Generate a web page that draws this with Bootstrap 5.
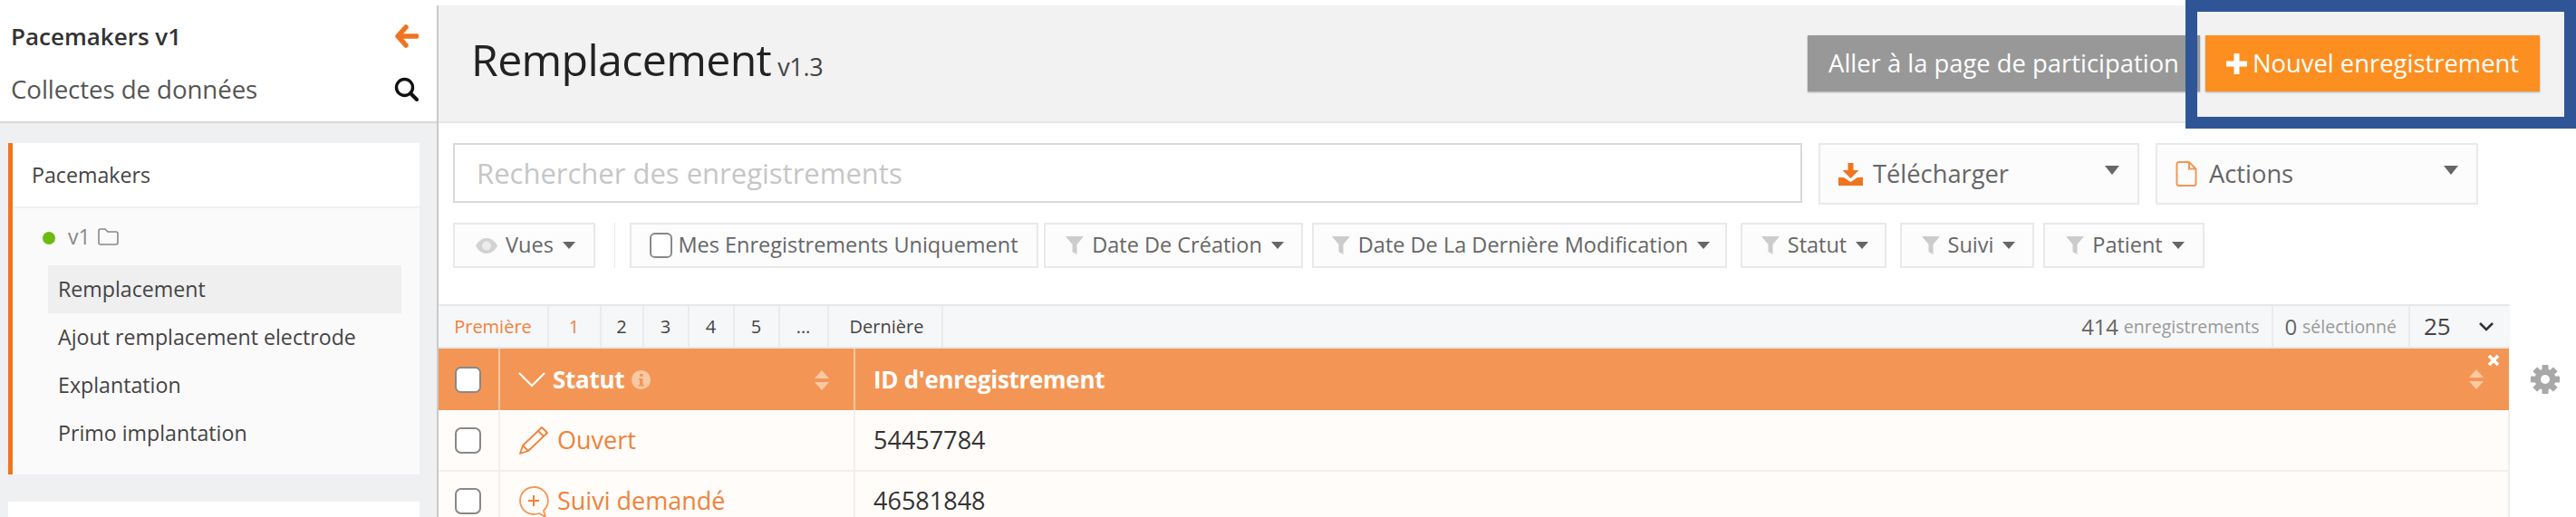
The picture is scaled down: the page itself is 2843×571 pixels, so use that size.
<!DOCTYPE html>
<html lang="fr">
<head>
<meta charset="utf-8">
<title>Remplacement</title>
<link href="https://cdn.jsdelivr.net/npm/bootstrap@5.3.0/dist/css/bootstrap.min.css" rel="stylesheet">
<style>
html,body{height:571px;overflow:hidden;background:#fff}
body{font-family:"Open Sans","Noto Sans",sans-serif;color:#333;width:2843px;position:relative}
.app-shell{height:571px;overflow:hidden}
.side-col{width:482px;flex:none;background:#eef0f2;height:571px;overflow:hidden}
.side-head{background:#fff;height:136px;border-bottom:2px solid #d9d9d9;padding:22px 20px 0 12px}
.side-title{font-size:26px;font-weight:600;line-height:36px;height:36px;color:#333}
.side-sub{font-size:27.700px;line-height:36px;margin-top:22px;color:#555;letter-spacing:-.1px}
.side-card{margin:22px 19px 0 9px;border-left:5px solid #f0741f;background:#fafafa;height:366px;padding:0}
.side-card-title{background:#fff;height:72px;border-bottom:2px solid #f1f1f1;font-size:23.200px;padding-left:21px;color:#444;display:flex;align-items:center}
.side-version{font-size:23px;color:#888;height:63px;padding-left:33px;gap:14px}
.vdot{width:14px;height:14px;border-radius:50%;background:#6cbb0e;display:block;margin-top:2px}
.side-links{margin:0 20px 0 39px}
.side-links .list-group-item{background:transparent;border:0;height:53px;padding:0 11px;font-size:23.200px;line-height:53px;color:#444;border-radius:0}
.side-links .list-group-item.is-current{background:#efefef}
.side-card2{margin:30px 19px 0 9px;background:#fff;height:60px}
.main-col{flex:1;min-width:0;margin-top:6px;border-left:2px solid #c9c9c9;height:565px;overflow:hidden;position:relative}
.page-head{background:#f2f2f2;height:130px;border-bottom:2px solid #e6e6e6;padding:0 40px 0 36px}
.page-name{font-size:48.200px;font-weight:400;margin:0;color:#222;line-height:1;letter-spacing:-.6px;position:relative;top:-5px}
.page-name small{font-size:27px;color:#444;letter-spacing:-.3px;margin-left:7px}
.head-btn{height:62px;border:0;border-radius:0;font-size:27.400px;color:#fff;box-shadow:0 1px 2px rgba(0,0,0,.3);padding:0;display:flex;align-items:center;justify-content:center}
.btn-grey{width:433px;background:#989898}
.btn-grey:hover{background:#989898;color:#fff}
.btn-orange{width:369px;background:#fc8f20;margin-left:6px;gap:6px}
.btn-orange:hover{background:#fc8f20;color:#fff}
.tools{padding:22px 0 0 16px}
.search-box.form-control{width:1489px;height:66px;flex:none;border:2px solid #d9d9d9;border-radius:0;font-size:31px;padding:0 24px;color:#333}
.search-box::placeholder{color:#c6c6c6;opacity:1}
.drop-btn{height:68px;width:354px;margin-left:18px;background:#fcfcfc;border:2px solid #e8e9ec;border-radius:0;font-size:27.300px;color:#666;padding:0 22px 0 20px;display:flex;align-items:center;gap:11px;position:relative}
.drop-btn.second{width:356px;gap:13px}
.caret-big{position:absolute;right:20px;top:23px;width:0;height:0;border-left:8.500px solid transparent;border-right:8.500px solid transparent;border-top:10px solid #666}
.filters{margin-top:20px;height:50px}
.fbtn{height:50px;background:#fcfcfc;border:2px solid #e8e9ec;border-radius:0;font-size:23.500px;color:#666;padding:0 0 0 3px;display:flex;align-items:center;justify-content:center;gap:9px;flex:none;white-space:nowrap}
.caret-sm{width:0;height:0;border-left:7px solid transparent;border-right:7px solid transparent;border-top:8px solid #666;margin-left:1px}
.vsep{width:1px;height:50px;background:#e8e9ec;margin:0 16px 0 21px;flex:none}
.box{width:25px;height:28px;margin:0;border:2px solid #888;border-radius:5px;flex:none;background:#fff}
.fbtn.w-mes{gap:6px;padding-left:0}
.w-vues{width:157px}.w-mes{width:451px;margin-right:6px}.w-crea{width:286px;margin-right:10px}.w-dern{width:458px;margin-right:15px}.w-stat{width:161px;margin-right:15px}.w-suiv{width:148px;margin-right:10px}.w-pat{width:178px}
.grid-wrap{margin-top:40px;width:2286px}
.pager{height:49px;background:#f6f7f8;border-top:2px solid #e6e7ea;border-bottom:2px solid #e6e7ea;font-size:20px;color:#444}
.pager .pagination{margin:0;height:100%}
.pager .page-link{background:transparent;border:0;border-right:2px solid #eaebed;border-radius:0!important;color:#444;padding:0;height:45px;display:flex;align-items:center;justify-content:center;font-size:20px;margin:0}
.pager .w-p7 .page-link{padding-left:4px}
.pager .is-on .page-link{color:#f0823a}
.w-p0{width:122px}.w-p1{width:58px}.w-p2{width:47px}.w-p3{width:50px}.w-p6{width:54px}.w-p7{width:126px}
.count-cell{height:45px;display:flex;align-items:center;padding:0 13px;border-right:2px solid #eaebed;gap:6px;font-size:24px;color:#666;letter-spacing:-.2px}
.count-cell span{font-size:19.500px;color:#999;letter-spacing:0}
.size-cell{width:110px;height:45px;display:flex;align-items:center;justify-content:space-between;padding:0 17px 0 15px;font-size:26px;color:#444}
.data-grid.table{table-layout:fixed;margin:0;width:2286px;border-collapse:collapse;--bs-table-bg:transparent}
.data-grid th{background:#f39655;height:68px;color:#fff;font-size:26px;font-weight:700;padding:0 20px;border:0;border-right:2px solid #f8c8a2;vertical-align:middle;position:relative;letter-spacing:-.3px}
.data-grid th:last-child{border-right:0}
.data-grid td{height:67px;background:#fffcf9;font-size:27px;padding:0 20px;border:0;border-right:2px solid #f1f0ee;border-bottom:2px solid #f1f0ee;vertical-align:middle;color:#333}
.data-grid td:last-child{border-right:2px solid #eeeeee}
.data-grid .col-check{width:67px;padding:0 0 0 18px}
.data-grid .box{display:block;width:29px;height:29px;border-width:2.500px}
.data-grid .col-stat{width:392px}
.state{color:#f0823a;gap:9px}
.state svg{flex:none}
.sort{position:absolute;right:27px;top:24px}
.sort-r{right:28px;top:23px}
.close-x{position:absolute;right:10px;top:6px}
.gear{position:absolute;left:2309px;top:397px}
.note-frame{position:absolute;left:2412px;top:0;width:431px;height:142px;border:13px solid #2f5597;pointer-events:none}
</style>
</head>
<body>
<div class="app-shell d-flex">
  <aside class="side-col">
    <div class="side-head">
      <div class="d-flex justify-content-between align-items-center side-title">Pacemakers v1
        <svg width="26" height="26" viewBox="0 0 26 26" aria-hidden="true"><path d="M12 3 3 13l9 10M4 13h20" fill="none" stroke="#f0741f" stroke-width="5.500" stroke-linecap="round" stroke-linejoin="round"/></svg>
      </div>
      <div class="d-flex justify-content-between align-items-center side-sub">Collectes de données
        <svg width="27" height="27" viewBox="0 0 27 27" aria-hidden="true"><circle cx="11.500" cy="11.500" r="9" fill="none" stroke="#111" stroke-width="3.400"/><path d="m18 18 7 7" stroke="#111" stroke-width="4" stroke-linecap="round"/></svg>
      </div>
    </div>
    <div class="side-card">
      <div class="side-card-title">Pacemakers</div>
      <div class="d-flex align-items-center side-version"><i class="vdot"></i><span class="d-flex align-items-center gap-2">v1
        <svg width="23" height="19" viewBox="0 0 23 19" aria-hidden="true"><path d="M1 16V3a2 2 0 0 1 2-2h5l3 3h9a2 2 0 0 1 2 2v10a2 2 0 0 1-2 2H3a2 2 0 0 1-2-2Z" fill="none" stroke="#888" stroke-width="1.600"/></svg></span></div>
      <div class="list-group side-links">
        <a class="list-group-item is-current">Remplacement</a>
        <a class="list-group-item">Ajout remplacement electrode</a>
        <a class="list-group-item">Explantation</a>
        <a class="list-group-item">Primo implantation</a>
      </div>
    </div>
    <div class="side-card2"></div>
  </aside>
  <main class="main-col">
    <header class="page-head d-flex justify-content-between align-items-center">
      <h1 class="page-name">Remplacement<small>v1.3</small></h1>
      <div class="d-flex">
        <a class="btn head-btn btn-grey">Aller à la page de participation</a>
        <a class="btn head-btn btn-orange"><svg width="23" height="23" viewBox="0 0 23 23" aria-hidden="true"><path d="M8.500 0h6v8.500h8.500v6h-8.500v8.500h-6v-8.500H0v-6h8.500Z" fill="#fff"/></svg>Nouvel enregistrement</a>
      </div>
    </header>
    <section class="tools">
      <div class="d-flex align-items-start">
        <input class="form-control search-box" type="text" placeholder="Rechercher des enregistrements">
        <button class="btn drop-btn" type="button">
          <svg width="27" height="25" viewBox="0 0 27 25" aria-hidden="true"><path d="M10.500 0h6v8h6l-9 9-9-9h6Z" fill="#f0741f"/><path d="M0 16h6l7.500 5 7.500-5h6v9H0Z" fill="#f0741f"/></svg>Télécharger<i class="caret-big"></i></button>
        <button class="btn drop-btn second" type="button">
          <svg width="24" height="28" viewBox="0 0 24 28" aria-hidden="true"><path d="M1.500 3a2 2 0 0 1 2-2H15l7.500 7.500V25a2 2 0 0 1-2 2h-17a2 2 0 0 1-2-2ZM15 1v7.500h7.500" fill="none" stroke="#f39655" stroke-width="2"/></svg>Actions<i class="caret-big"></i></button>
      </div>
      <div class="d-flex filters">
        <button class="btn fbtn w-vues" type="button"><svg width="24" height="17" viewBox="0 0 24 17" aria-hidden="true"><path d="M0 8.500C3 3 7 0 12 0s9 3 12 8.500C21 14 17 17 12 17S3 14 0 8.500Z" fill="#d2d2d2"/><circle cx="12" cy="8.500" r="5" fill="#ececec"/></svg>Vues<i class="caret-sm"></i></button>
        <span class="vsep"></span>
        <button class="btn fbtn w-mes" type="button"><input class="form-check-input box" type="checkbox" aria-label="Mes Enregistrements Uniquement">Mes Enregistrements Uniquement</button>
        <button class="btn fbtn w-crea" type="button"><svg width="20" height="20" viewBox="0 0 20 20" aria-hidden="true"><path d="M0 0h20l-7.500 9v11l-5-3V9Z" fill="#cccccc"/></svg>Date De Création<i class="caret-sm"></i></button>
        <button class="btn fbtn w-dern" type="button"><svg width="20" height="20" viewBox="0 0 20 20" aria-hidden="true"><path d="M0 0h20l-7.500 9v11l-5-3V9Z" fill="#cccccc"/></svg>Date De La Dernière Modification<i class="caret-sm"></i></button>
        <button class="btn fbtn w-stat" type="button"><svg width="20" height="20" viewBox="0 0 20 20" aria-hidden="true"><path d="M0 0h20l-7.500 9v11l-5-3V9Z" fill="#cccccc"/></svg>Statut<i class="caret-sm"></i></button>
        <button class="btn fbtn w-suiv" type="button"><svg width="20" height="20" viewBox="0 0 20 20" aria-hidden="true"><path d="M0 0h20l-7.500 9v11l-5-3V9Z" fill="#cccccc"/></svg>Suivi<i class="caret-sm"></i></button>
        <button class="btn fbtn w-pat" type="button"><svg width="20" height="20" viewBox="0 0 20 20" aria-hidden="true"><path d="M0 0h20l-7.500 9v11l-5-3V9Z" fill="#cccccc"/></svg>Patient<i class="caret-sm"></i></button>
      </div>
    </section>
    <section class="grid-wrap">
      <div class="pager d-flex justify-content-between">
        <ul class="pagination">
          <li class="page-item is-on w-p0"><a class="page-link">Première</a></li>
          <li class="page-item is-on w-p1"><a class="page-link">1</a></li>
          <li class="page-item w-p2"><a class="page-link">2</a></li>
          <li class="page-item w-p3"><a class="page-link">3</a></li>
          <li class="page-item w-p3"><a class="page-link">4</a></li>
          <li class="page-item w-p3"><a class="page-link">5</a></li>
          <li class="page-item w-p6"><a class="page-link">…</a></li>
          <li class="page-item w-p7"><a class="page-link">Dernière</a></li>
        </ul>
        <div class="d-flex">
          <div class="count-cell">414 <span>enregistrements</span></div>
          <div class="count-cell">0 <span>sélectionné</span></div>
          <div class="size-cell">25
            <svg width="18" height="12" viewBox="0 0 18 12" aria-hidden="true"><path d="m2 2 7 7 7-7" fill="none" stroke="#333" stroke-width="2.600"/></svg>
          </div>
        </div>
      </div>
      <table class="table data-grid">
        <thead>
          <tr>
            <th class="col-check"><input class="form-check-input box" type="checkbox" aria-label="Tout sélectionner"></th>
            <th class="col-stat"><span class="d-flex align-items-center gap-2">
              <svg width="30" height="17" viewBox="0 0 30 17" aria-hidden="true"><path d="m1 1 14 14L29 1" fill="none" stroke="#fff" stroke-width="2"/></svg>Statut
              <svg width="21" height="21" viewBox="0 0 21 21" aria-hidden="true"><circle cx="10.500" cy="10.500" r="10.500" fill="#f8c9a5"/><rect x="9" y="4" width="3.500" height="3" fill="#f39655"/><path d="M8 9h4.500v7H14v1.500H7.500V16H9v-5.500H8Z" fill="#f39655"/></svg></span>
              <svg class="sort" width="16" height="22" viewBox="0 0 16 22" aria-hidden="true"><path d="M8 0l8 9H0Z M8 22l8-9H0Z" fill="#fac9a3"/></svg>
            </th>
            <th>ID d'enregistrement
              <svg class="sort sort-r" width="16" height="22" viewBox="0 0 16 22" aria-hidden="true"><path d="M8 0l8 9H0Z M8 22l8-9H0Z" fill="#fac9a3"/></svg>
              <svg class="close-x" width="14" height="14" viewBox="0 0 14 14" aria-hidden="true"><path d="m2 2 10 10M12 2 2 12" stroke="#fff" stroke-width="3.600"/></svg>
            </th>
          </tr>
        </thead>
        <tbody>
          <tr>
            <td class="col-check"><input class="form-check-input box" type="checkbox" aria-label="Sélectionner 54457784"></td>
            <td><span class="d-flex align-items-center state">
              <svg width="34" height="33" viewBox="0 0 34 33" aria-hidden="true"><path d="M26 2 32 8 11 28 2 31 5 22ZM22 6l6 6M5 22l6 6" fill="none" stroke="#f0823a" stroke-width="1.800" stroke-linejoin="round"/></svg>Ouvert</span></td>
            <td>54457784</td>
          </tr>
          <tr>
            <td class="col-check"><input class="form-check-input box" type="checkbox" aria-label="Sélectionner 46581848"></td>
            <td><span class="d-flex align-items-center state">
              <svg width="34" height="36" viewBox="0 0 34 36" aria-hidden="true"><path d="M17 2a15 15 0 1 0 0 30c2 0 4-.3 6-1l7 4-2-7a15 15 0 0 0-11-26Z" fill="none" stroke="#f39655" stroke-width="1.800"/><path d="M17 11v12M11 17h12" stroke="#f0823a" stroke-width="2"/></svg>Suivi demandé</span></td>
            <td>46581848</td>
          </tr>
        </tbody>
      </table>
      <svg class="gear" width="32" height="32" viewBox="0 0 32 32" aria-hidden="true"><g fill="#a8a8a8"><circle cx="16" cy="16" r="11.500"/><rect x="12.500" y="0" width="7" height="32" rx="1"/><rect x="12.500" y="0" width="7" height="32" rx="1" transform="rotate(45 16 16)"/><rect x="12.500" y="0" width="7" height="32" rx="1" transform="rotate(90 16 16)"/><rect x="12.500" y="0" width="7" height="32" rx="1" transform="rotate(135 16 16)"/></g><circle cx="16" cy="16" r="5" fill="#fff"/></svg>
    </section>
  </main>
</div>
<div class="note-frame"></div>
<script src="https://cdn.jsdelivr.net/npm/bootstrap@5.3.0/dist/js/bootstrap.bundle.min.js"></script>
</body>
</html>
